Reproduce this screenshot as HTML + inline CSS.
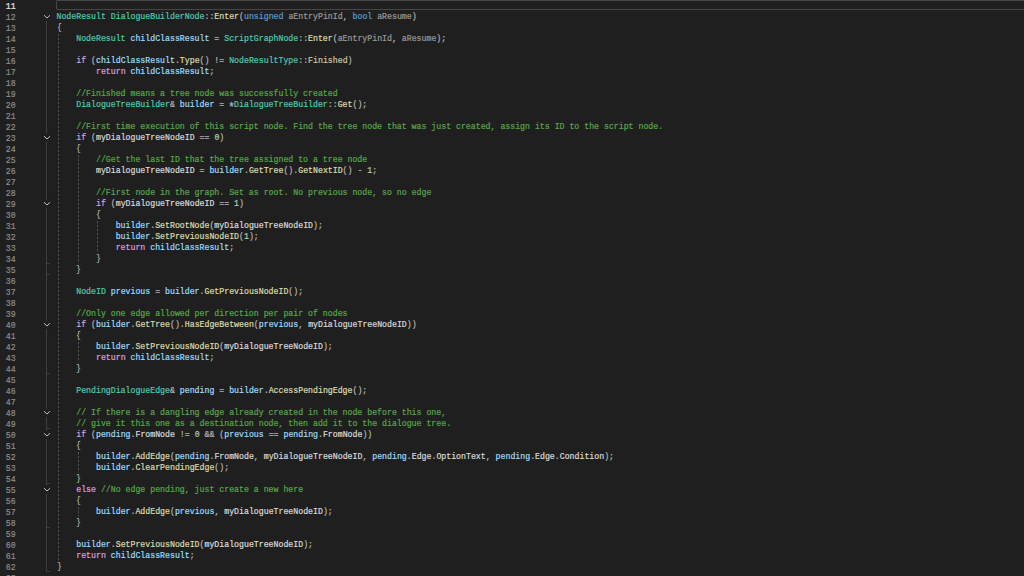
<!DOCTYPE html>
<html><head><meta charset="utf-8"><style>
html,body{margin:0;padding:0;}
body{width:1024px;height:576px;overflow:hidden;background:#1f1f1f;position:relative;font-family:"Liberation Mono",monospace;}
.l,.n{position:absolute;white-space:pre;font-size:8.22px;line-height:11px;height:11px;}
.l{-webkit-text-stroke:0.2px currentColor;left:56.5px;transform-origin:0 0;transform:scale(1,1.15);}
.n{-webkit-text-stroke:0.15px currentColor;left:0;width:15.6px;text-align:right;color:#8f8f8f;transform-origin:100% 0;transform:scale(1,1.15);}
.n.cur{color:#e6e6e6;transform:scale(1,1.2);margin-top:-1.2px;-webkit-text-stroke:0.2px currentColor;}
i{font-style:normal;}
.o{color:#B4B4B4}.t{color:#4EC9B0}.k{color:#D8A0DF}.b{color:#569CD6}.f{color:#DCDCAA}.l2{}
.p{color:#9A9A9A}.m{color:#DADADA}.c{color:#57A64A}.e{color:#C9C9A0}
i.v{color:#9CDCFE}
.nn{color:#B5CEA8}
b.ast{font-weight:normal;display:inline-block;transform:translateY(2.0px) scale(1.35);}
b.br{font-weight:normal;display:inline-block;transform-origin:50% 35%;transform:scale(0.9,0.86);}
#box{position:absolute;left:56px;top:0px;width:990px;height:10px;border:1px solid #464646;border-radius:1px;box-sizing:border-box;}
svg{position:absolute;left:0;top:0;}
</style></head><body>
<div id="box"></div>
<svg width="1024" height="576"><line x1="58.50" y1="33.92" x2="58.50" y2="560.42" stroke="#505050" stroke-width="1" stroke-dasharray="2.4 1.6"/>
<line x1="78.50" y1="154.92" x2="78.50" y2="263.42" stroke="#505050" stroke-width="1" stroke-dasharray="2.4 1.6"/>
<line x1="97.50" y1="220.92" x2="97.50" y2="252.42" stroke="#505050" stroke-width="1" stroke-dasharray="2.4 1.6"/>
<line x1="78.50" y1="341.92" x2="78.50" y2="362.42" stroke="#505050" stroke-width="1" stroke-dasharray="2.4 1.6"/>
<line x1="78.50" y1="451.92" x2="78.50" y2="472.42" stroke="#505050" stroke-width="1" stroke-dasharray="2.4 1.6"/>
<line x1="78.50" y1="506.92" x2="78.50" y2="516.42" stroke="#505050" stroke-width="1" stroke-dasharray="2.4 1.6"/>
<path d="M46.50 20.92 L46.50 571.50 L50.00 571.50" fill="none" stroke="#3e3e3e" stroke-width="1"/>
<path d="M46.50 141.92 L46.50 274.50 L50.00 274.50" fill="none" stroke="#3e3e3e" stroke-width="1"/>
<path d="M46.50 207.92 L46.50 263.50 L50.00 263.50" fill="none" stroke="#3e3e3e" stroke-width="1"/>
<path d="M46.50 328.92 L46.50 373.50 L50.00 373.50" fill="none" stroke="#3e3e3e" stroke-width="1"/>
<path d="M46.50 416.92 L46.50 428.50 L50.00 428.50" fill="none" stroke="#3e3e3e" stroke-width="1"/>
<path d="M46.50 438.92 L46.50 483.50 L50.00 483.50" fill="none" stroke="#3e3e3e" stroke-width="1"/>
<path d="M46.50 493.92 L46.50 527.50 L50.00 527.50" fill="none" stroke="#3e3e3e" stroke-width="1"/>
<rect x="42.50" y="12.62" width="8" height="8.30" fill="#1f1f1f"/>
<rect x="42.50" y="133.62" width="8" height="8.30" fill="#1f1f1f"/>
<rect x="42.50" y="199.62" width="8" height="8.30" fill="#1f1f1f"/>
<rect x="42.50" y="320.62" width="8" height="8.30" fill="#1f1f1f"/>
<rect x="42.50" y="408.62" width="8" height="8.30" fill="#1f1f1f"/>
<rect x="42.50" y="430.62" width="8" height="8.30" fill="#1f1f1f"/>
<rect x="42.50" y="485.62" width="8" height="8.30" fill="#1f1f1f"/>
<path d="M44.00 15.22 L47.00 18.02 L50.00 15.22" fill="none" stroke="#bdbdbd" stroke-width="1.0" stroke-linejoin="round"/>
<path d="M44.00 136.22 L47.00 139.02 L50.00 136.22" fill="none" stroke="#bdbdbd" stroke-width="1.0" stroke-linejoin="round"/>
<path d="M44.00 202.22 L47.00 205.02 L50.00 202.22" fill="none" stroke="#bdbdbd" stroke-width="1.0" stroke-linejoin="round"/>
<path d="M44.00 323.22 L47.00 326.02 L50.00 323.22" fill="none" stroke="#bdbdbd" stroke-width="1.0" stroke-linejoin="round"/>
<path d="M44.00 411.22 L47.00 414.02 L50.00 411.22" fill="none" stroke="#bdbdbd" stroke-width="1.0" stroke-linejoin="round"/>
<path d="M44.00 433.22 L47.00 436.02 L50.00 433.22" fill="none" stroke="#bdbdbd" stroke-width="1.0" stroke-linejoin="round"/>
<path d="M44.00 488.22 L47.00 491.02 L50.00 488.22" fill="none" stroke="#bdbdbd" stroke-width="1.0" stroke-linejoin="round"/></svg>
<div class="n cur" style="top:-0.08px">11</div>
<div class="n" style="top:10.92px">12</div>
<div class="n" style="top:21.92px">13</div>
<div class="n" style="top:32.92px">14</div>
<div class="n" style="top:43.92px">15</div>
<div class="n" style="top:54.92px">16</div>
<div class="n" style="top:65.92px">17</div>
<div class="n" style="top:76.92px">18</div>
<div class="n" style="top:87.92px">19</div>
<div class="n" style="top:98.92px">20</div>
<div class="n" style="top:109.92px">21</div>
<div class="n" style="top:120.92px">22</div>
<div class="n" style="top:131.92px">23</div>
<div class="n" style="top:142.92px">24</div>
<div class="n" style="top:153.92px">25</div>
<div class="n" style="top:164.92px">26</div>
<div class="n" style="top:175.92px">27</div>
<div class="n" style="top:186.92px">28</div>
<div class="n" style="top:197.92px">29</div>
<div class="n" style="top:208.92px">30</div>
<div class="n" style="top:219.92px">31</div>
<div class="n" style="top:230.92px">32</div>
<div class="n" style="top:241.92px">33</div>
<div class="n" style="top:252.92px">34</div>
<div class="n" style="top:263.92px">35</div>
<div class="n" style="top:274.92px">36</div>
<div class="n" style="top:285.92px">37</div>
<div class="n" style="top:296.92px">38</div>
<div class="n" style="top:307.92px">39</div>
<div class="n" style="top:318.92px">40</div>
<div class="n" style="top:329.92px">41</div>
<div class="n" style="top:340.92px">42</div>
<div class="n" style="top:351.92px">43</div>
<div class="n" style="top:362.92px">44</div>
<div class="n" style="top:373.92px">45</div>
<div class="n" style="top:384.92px">46</div>
<div class="n" style="top:395.92px">47</div>
<div class="n" style="top:406.92px">48</div>
<div class="n" style="top:417.92px">49</div>
<div class="n" style="top:428.92px">50</div>
<div class="n" style="top:439.92px">51</div>
<div class="n" style="top:450.92px">52</div>
<div class="n" style="top:461.92px">53</div>
<div class="n" style="top:472.92px">54</div>
<div class="n" style="top:483.92px">55</div>
<div class="n" style="top:494.92px">56</div>
<div class="n" style="top:505.92px">57</div>
<div class="n" style="top:516.92px">58</div>
<div class="n" style="top:527.92px">59</div>
<div class="n" style="top:538.92px">60</div>
<div class="n" style="top:549.92px">61</div>
<div class="n" style="top:560.92px">62</div>
<div class="n" style="top:571.92px">63</div>
<div class="l" style="top:-0.58px"></div>
<div class="l" style="top:10.42px"><i class="t">NodeResult</i> <i class="t">DialogueBuilderNode</i><i class="o">::</i><i class="f">Enter</i><i class="o">(</i><i class="b">unsigned</i> <i class="p">aEntryPinId</i><i class="o">, </i><i class="b">bool</i> <i class="p">aResume</i><i class="o">)</i></div>
<div class="l" style="top:21.42px"><i class="o"><b class="br">{</b></i></div>
<div class="l" style="top:32.42px">    <i class="t">NodeResult</i> <i class="v">childClassResult</i><i class="o"> = </i><i class="t">ScriptGraphNode</i><i class="o">::</i><i class="f">Enter</i><i class="o">(</i><i class="p">aEntryPinId</i><i class="o">, </i><i class="p">aResume</i><i class="o">);</i></div>
<div class="l" style="top:43.42px"></div>
<div class="l" style="top:54.42px">    <i class="k">if</i><i class="o"> (</i><i class="v">childClassResult</i><i class="o">.</i><i class="f">Type</i><i class="o">() != </i><i class="t">NodeResultType</i><i class="o">::</i><i class="e">Finished</i><i class="o">)</i></div>
<div class="l" style="top:65.42px">        <i class="k">return</i> <i class="v">childClassResult</i><i class="o">;</i></div>
<div class="l" style="top:76.42px"></div>
<div class="l" style="top:87.42px">    <i class="c">//Finished means a tree node was successfully created</i></div>
<div class="l" style="top:98.42px">    <i class="t">DialogueTreeBuilder</i><i class="o">&amp; </i><i class="v">builder</i><i class="o"> = <b class="ast">*</b></i><i class="t">DialogueTreeBuilder</i><i class="o">::</i><i class="f">Get</i><i class="o">();</i></div>
<div class="l" style="top:109.42px"></div>
<div class="l" style="top:120.42px">    <i class="c">//First time execution of this script node. Find the tree node that was just created, assign its ID to the script node.</i></div>
<div class="l" style="top:131.42px">    <i class="k">if</i><i class="o"> (</i><i class="m">myDialogueTreeNodeID</i><i class="o"> == </i><i class="nn">0</i><i class="o">)</i></div>
<div class="l" style="top:142.42px"><i class="o">    <b class="br">{</b></i></div>
<div class="l" style="top:153.42px">        <i class="c">//Get the last ID that the tree assigned to a tree node</i></div>
<div class="l" style="top:164.42px">        <i class="m">myDialogueTreeNodeID</i><i class="o"> = </i><i class="v">builder</i><i class="o">.</i><i class="f">GetTree</i><i class="o">().</i><i class="f">GetNextID</i><i class="o">() - </i><i class="nn">1</i><i class="o">;</i></div>
<div class="l" style="top:175.42px"></div>
<div class="l" style="top:186.42px">        <i class="c">//First node in the graph. Set as root. No previous node, so no edge</i></div>
<div class="l" style="top:197.42px">        <i class="k">if</i><i class="o"> (</i><i class="m">myDialogueTreeNodeID</i><i class="o"> == </i><i class="nn">1</i><i class="o">)</i></div>
<div class="l" style="top:208.42px"><i class="o">        <b class="br">{</b></i></div>
<div class="l" style="top:219.42px">            <i class="v">builder</i><i class="o">.</i><i class="f">SetRootNode</i><i class="o">(</i><i class="m">myDialogueTreeNodeID</i><i class="o">);</i></div>
<div class="l" style="top:230.42px">            <i class="v">builder</i><i class="o">.</i><i class="f">SetPreviousNodeID</i><i class="o">(</i><i class="nn">1</i><i class="o">);</i></div>
<div class="l" style="top:241.42px">            <i class="k">return</i> <i class="v">childClassResult</i><i class="o">;</i></div>
<div class="l" style="top:252.42px"><i class="o">        <b class="br">}</b></i></div>
<div class="l" style="top:263.42px"><i class="o">    <b class="br">}</b></i></div>
<div class="l" style="top:274.42px"></div>
<div class="l" style="top:285.42px">    <i class="t">NodeID</i> <i class="v">previous</i><i class="o"> = </i><i class="v">builder</i><i class="o">.</i><i class="f">GetPreviousNodeID</i><i class="o">();</i></div>
<div class="l" style="top:296.42px"></div>
<div class="l" style="top:307.42px">    <i class="c">//Only one edge allowed per direction per pair of nodes</i></div>
<div class="l" style="top:318.42px">    <i class="k">if</i><i class="o"> (</i><i class="v">builder</i><i class="o">.</i><i class="f">GetTree</i><i class="o">().</i><i class="f">HasEdgeBetween</i><i class="o">(</i><i class="v">previous</i><i class="o">, </i><i class="m">myDialogueTreeNodeID</i><i class="o">))</i></div>
<div class="l" style="top:329.42px"><i class="o">    <b class="br">{</b></i></div>
<div class="l" style="top:340.42px">        <i class="v">builder</i><i class="o">.</i><i class="f">SetPreviousNodeID</i><i class="o">(</i><i class="m">myDialogueTreeNodeID</i><i class="o">);</i></div>
<div class="l" style="top:351.42px">        <i class="k">return</i> <i class="v">childClassResult</i><i class="o">;</i></div>
<div class="l" style="top:362.42px"><i class="o">    <b class="br">}</b></i></div>
<div class="l" style="top:373.42px"></div>
<div class="l" style="top:384.42px">    <i class="t">PendingDialogueEdge</i><i class="o">&amp; </i><i class="v">pending</i><i class="o"> = </i><i class="v">builder</i><i class="o">.</i><i class="f">AccessPendingEdge</i><i class="o">();</i></div>
<div class="l" style="top:395.42px"></div>
<div class="l" style="top:406.42px">    <i class="c">// If there is a dangling edge already created in the node before this one,</i></div>
<div class="l" style="top:417.42px">    <i class="c">// give it this one as a destination node, then add it to the dialogue tree.</i></div>
<div class="l" style="top:428.42px">    <i class="k">if</i><i class="o"> (</i><i class="v">pending</i><i class="o">.</i><i class="m">FromNode</i><i class="o"> != </i><i class="nn">0</i><i class="o"> &amp;&amp; (</i><i class="v">previous</i><i class="o"> == </i><i class="v">pending</i><i class="o">.</i><i class="m">FromNode</i><i class="o">))</i></div>
<div class="l" style="top:439.42px"><i class="o">    <b class="br">{</b></i></div>
<div class="l" style="top:450.42px">        <i class="v">builder</i><i class="o">.</i><i class="f">AddEdge</i><i class="o">(</i><i class="v">pending</i><i class="o">.</i><i class="m">FromNode</i><i class="o">, </i><i class="m">myDialogueTreeNodeID</i><i class="o">, </i><i class="v">pending</i><i class="o">.</i><i class="m">Edge</i><i class="o">.</i><i class="m">OptionText</i><i class="o">, </i><i class="v">pending</i><i class="o">.</i><i class="m">Edge</i><i class="o">.</i><i class="m">Condition</i><i class="o">);</i></div>
<div class="l" style="top:461.42px">        <i class="v">builder</i><i class="o">.</i><i class="f">ClearPendingEdge</i><i class="o">();</i></div>
<div class="l" style="top:472.42px"><i class="o">    <b class="br">}</b></i></div>
<div class="l" style="top:483.42px">    <i class="k">else</i> <i class="c">//No edge pending, just create a new here</i></div>
<div class="l" style="top:494.42px"><i class="o">    <b class="br">{</b></i></div>
<div class="l" style="top:505.42px">        <i class="v">builder</i><i class="o">.</i><i class="f">AddEdge</i><i class="o">(</i><i class="v">previous</i><i class="o">, </i><i class="m">myDialogueTreeNodeID</i><i class="o">);</i></div>
<div class="l" style="top:516.42px"><i class="o">    <b class="br">}</b></i></div>
<div class="l" style="top:527.42px"></div>
<div class="l" style="top:538.42px">    <i class="v">builder</i><i class="o">.</i><i class="f">SetPreviousNodeID</i><i class="o">(</i><i class="m">myDialogueTreeNodeID</i><i class="o">);</i></div>
<div class="l" style="top:549.42px">    <i class="k">return</i> <i class="v">childClassResult</i><i class="o">;</i></div>
<div class="l" style="top:560.42px"><i class="o"><b class="br">}</b></i></div>
<div class="l" style="top:571.42px"></div>
</body></html>
